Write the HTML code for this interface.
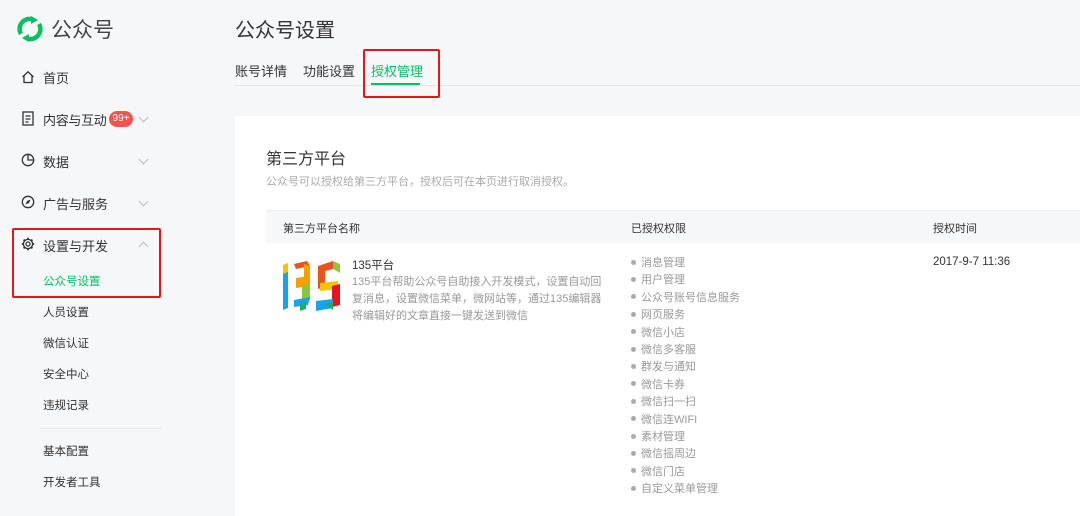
<!DOCTYPE html>
<html><head><meta charset="utf-8"><style>
*{margin:0;padding:0;box-sizing:border-box}
body{width:1080px;height:505px;overflow:hidden;background:#f6f7f9;font-family:"Liberation Sans","Noto Sans CJK SC",sans-serif;position:relative;color:#333}
.a{position:absolute;white-space:nowrap}
.nav{font-size:13px;color:#333}
.sub{font-size:11.5px;color:#333}
.chev{position:absolute;width:7px;height:7px;border-right:1.3px solid #bbb;border-bottom:1.3px solid #bbb;transform:rotate(45deg)}
.perm{font-size:11px;color:#999;line-height:17.4px}
.perm div:before{content:"";display:inline-block;width:5px;height:5px;border-radius:50%;background:#aaa;margin-right:5px;vertical-align:middle;position:relative;top:-1px}
</style></head><body>
<!-- logo -->
<svg class="a" style="left:16px;top:15px" width="28" height="28" viewBox="0 0 28 28">
<path d="M17 4.5 A10 10 0 0 0 5 19" fill="none" stroke="#07c160" stroke-width="4.5"/>
<path d="M11 23.5 A10 10 0 0 0 23 9" fill="none" stroke="#07c160" stroke-width="4.5"/>
<path d="M15 1 L22 5 L15 9 Z" fill="#07c160"/>
<path d="M13 27 L6 23 L13 19 Z" fill="#07c160"/>
</svg>
<div class="a" style="left:51px;top:14px;font-size:21px;color:#444">公众号</div>

<svg class="a" style="left:21px;top:70px" width="14" height="14" viewBox="0 0 14 14"><path d="M1.5 7 L7 1.8 L12.5 7 M3 6 V12.5 H11 V6" fill="none" stroke="#333" stroke-width="1.3"/></svg>
<div class="a nav" style="left:43px;top:68px">首页</div>

<svg class="a" style="left:21px;top:111px" width="14" height="15" viewBox="0 0 14 15"><rect x="2" y="1" width="10" height="13" fill="none" stroke="#333" stroke-width="1.3"/><path d="M4.5 5H9.5M4.5 8H9.5M4.5 11H7.5" stroke="#333" stroke-width="1.2"/></svg>
<div class="a nav" style="left:43px;top:110px;letter-spacing:-0.3px">内容与互动</div>
<div class="a" style="left:109px;top:111px;width:24px;height:16px;border-radius:8px;background:#fa5151;color:#fff;font-size:10px;text-align:center;line-height:16px">99+</div>
<div class="chev" style="left:140px;top:114px"></div>

<svg class="a" style="left:21px;top:153px" width="14" height="14" viewBox="0 0 14 14"><circle cx="7" cy="7" r="5.7" fill="none" stroke="#333" stroke-width="1.3"/><path d="M7 1.3V7H12.7" fill="none" stroke="#333" stroke-width="1.3"/></svg>
<div class="a nav" style="left:43px;top:152px">数据</div>
<div class="chev" style="left:140px;top:156px"></div>

<svg class="a" style="left:21px;top:195px" width="14" height="14" viewBox="0 0 14 14"><circle cx="7" cy="7" r="5.7" fill="none" stroke="#333" stroke-width="1.3"/><path d="M9.5 4.5 L8 8 L4.5 9.5 L6 6 Z" fill="#333"/></svg>
<div class="a nav" style="left:43px;top:194px">广告与服务</div>
<div class="chev" style="left:140px;top:198px"></div>

<svg class="a" style="left:21px;top:237px" width="14" height="14" viewBox="0 0 14 14"><circle cx="7" cy="7" r="2" fill="none" stroke="#333" stroke-width="1.2"/><circle cx="7" cy="7" r="4.6" fill="none" stroke="#333" stroke-width="1.3"/><path d="M7 0.8V2.6M7 11.4V13.2M0.8 7H2.6M11.4 7H13.2M2.6 2.6L3.8 3.8M10.2 10.2L11.4 11.4M2.6 11.4L3.8 10.2M10.2 3.8L11.4 2.6" stroke="#333" stroke-width="1.8"/></svg>
<div class="a nav" style="left:43px;top:236px">设置与开发</div>
<div class="chev" style="left:140px;top:243px;transform:rotate(-135deg)"></div>
<div class="a" style="left:12px;top:228px;width:149px;height:70px;border:2.5px solid #e8141c;border-radius:2px"></div>

<div class="a sub" style="left:43px;top:273px;color:#07c160">公众号设置</div>
<div class="a sub" style="left:43px;top:304px">人员设置</div>
<div class="a sub" style="left:43px;top:335px">微信认证</div>
<div class="a sub" style="left:43px;top:366px">安全中心</div>
<div class="a sub" style="left:43px;top:397px">违规记录</div>
<div class="a" style="left:40px;top:428px;width:122px;height:1px;background:#e8e8e8"></div>
<div class="a sub" style="left:43px;top:443px">基本配置</div>
<div class="a sub" style="left:43px;top:474px">开发者工具</div>

<!-- main -->
<div class="a" style="left:235px;top:14px;font-size:20px;color:#333">公众号设置</div>
<div class="a" style="left:235px;top:61px;font-size:13px;color:#333">账号详情</div>
<div class="a" style="left:303px;top:61px;font-size:13px;color:#333">功能设置</div>
<div class="a" style="left:371px;top:61px;font-size:13px;color:#07c160">授权管理</div>
<div class="a" style="left:235px;top:85px;width:845px;height:1px;background:#e5e5e5"></div>
<div class="a" style="left:371px;top:83px;width:49px;height:2px;background:#07c160"></div>
<div class="a" style="left:363px;top:49px;width:77px;height:49px;border:2.5px solid #e8141c;border-radius:2px"></div>

<div class="a" style="left:235px;top:116px;width:845px;height:400px;background:#fff"></div>
<div class="a" style="left:266px;top:145px;font-size:16px;color:#333">第三方平台</div>
<div class="a" style="left:266px;top:173px;font-size:11px;color:#aaa">公众号可以授权给第三方平台，授权后可在本页进行取消授权。</div>

<div class="a" style="left:266px;top:210px;width:814px;height:33px;background:#f6f7f9;border-top:1px solid #eee"></div>
<div class="a" style="left:283px;top:220px;font-size:11px;color:#333">第三方平台名称</div>
<div class="a" style="left:631px;top:220px;font-size:11px;color:#333">已授权权限</div>
<div class="a" style="left:933px;top:220px;font-size:11px;color:#333">授权时间</div>

<!-- 135 logo -->
<svg class="a" style="left:281px;top:260px" width="65" height="52" viewBox="0 0 65 52">
<path d="M2 8 L7 6 V48 L2 50 Z" fill="#1aa3e8"/><path d="M2 5 L7 3 V12 L2 14Z" fill="#f5c400"/>
<path d="M13 4 L26 1 L29 6 L15 9Z" fill="#e8541c"/><path d="M23 4 L29 6 V21 L23 19Z" fill="#f5a000"/>
<path d="M15 18 L29 16 V26 L15 28Z" fill="#f5a000"/><path d="M21 26 L29 24 V40 L21 42Z" fill="#8cc63e"/>
<path d="M13 40 L29 37 L27 45 L13 47Z" fill="#1aa3e8"/><path d="M19 44 L25 42 V49 L19 51Z" fill="#2a6"/>
<path d="M37 6 L52 1 V9 L37 13Z" fill="#e8541c"/><path d="M52 1 L59 4 V13 L52 9Z" fill="#8cc63e"/>
<path d="M37 10 L44 8 V27 L37 29Z" fill="#e8541c"/><path d="M39 23 L57 21 V29 L39 31Z" fill="#f5c400"/>
<path d="M51 26 L59 24 V45 L51 47Z" fill="#e8141c"/><path d="M35 41 L52 39 V48 L35 51Z" fill="#1aa3e8"/><path d="M44 44 L52 42 V50Z" fill="#2a6"/>
</svg>
<div class="a" style="left:352px;top:257px;font-size:11.5px;color:#333">135平台</div>
<div class="a" style="left:352px;top:274px;font-size:11px;color:#999;line-height:17px;white-space:normal;width:252px">135平台帮助公众号自助接入开发模式，设置自动回复消息，设置微信菜单，微网站等，通过135编辑器将编辑好的文章直接一键发送到微信</div>

<div class="a perm" style="left:631px;top:255px">
<div>消息管理</div><div>用户管理</div><div>公众号账号信息服务</div><div>网页服务</div><div>微信小店</div><div>微信多客服</div><div>群发与通知</div><div>微信卡券</div><div>微信扫一扫</div><div>微信连WIFI</div><div>素材管理</div><div>微信摇周边</div><div>微信门店</div><div>自定义菜单管理</div>
</div>
<div class="a" style="left:933px;top:256px;font-size:11.5px;color:#333">2017-9-7 11:36</div>
</body></html>
